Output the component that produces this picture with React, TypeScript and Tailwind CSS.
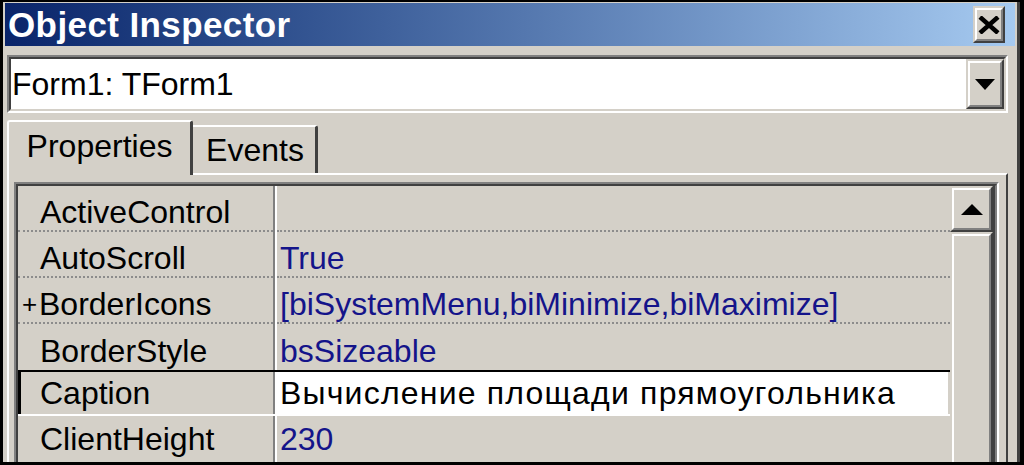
import React from "react";

type Row = {
  name: string;
  value: string;
  plus?: boolean;
  selected?: boolean;
};

const rows: Row[] = [
  { name: "ActiveControl", value: "" },
  { name: "AutoScroll", value: "True" },
  { name: "BorderIcons", value: "[biSystemMenu,biMinimize,biMaximize]", plus: true },
  { name: "BorderStyle", value: "bsSizeable" },
  { name: "Caption", value: "Вычисление площади прямоугольника", selected: true },
  { name: "ClientHeight", value: "230" },
];

function Raised({ className, children }: { className: string; children?: React.ReactNode }) {
  return (
    <div
      className={
        "border-2 border-t-[#d4d0c8] border-l-[#d4d0c8] border-r-[#404040] border-b-[#404040] bg-[#d4d0c8] " +
        className
      }
    >
      <div className="w-full h-full border-2 border-t-white border-l-white border-r-[#808080] border-b-[#808080] flex items-center justify-center">
        {children}
      </div>
    </div>
  );
}

function PropRow({ row, index }: { row: Row; index: number }) {
  const beforeSelected = rows[index + 1]?.selected;
  const last = index === rows.length - 1;
  const dotted = !row.selected && !beforeSelected && !last;
  const cell = dotted ? "border-b-2 border-dotted border-b-[#8c8c8c]" : "";
  const shift = row.selected || last ? "" : "pt-[7px]";

  return (
    <div
      className={
        "flex h-[46px] shrink-0 " +
        (row.selected ? "border-t-2 border-t-black border-b-2 border-b-white" : "")
      }
    >
      <div
        className={
          "w-[255px] shrink-0 flex items-center " +
          cell +
          " " +
          shift +
          " " +
          (row.selected ? "border-l-[3px] border-l-black pl-[19px]" : row.plus ? "pl-[4px]" : "pl-[22px]")
        }
      >
        {row.plus && <span className="w-[17px] text-[26px]">+</span>}
        <span>{row.name}</span>
      </div>
      <div className="w-[4px] shrink-0 border-l-2 border-l-[#808080] border-r-2 border-r-white" />
      <div
        className={
          "flex-1 flex items-center pl-[3px] whitespace-nowrap " +
          cell +
          " " +
          shift +
          " " +
          (row.selected ? "bg-white text-black mr-[2px] tracking-[1.2px]" : "text-[#14148a]")
        }
      >
        {row.value}
      </div>
    </div>
  );
}

export default function App() {
  return (
    <div className="w-[1024px] h-[465px] bg-black pl-[3px] pt-[2px] pr-[4px] overflow-hidden font-['Liberation_Sans',Arial,sans-serif] text-[32px] leading-none text-black">
      <div className="h-[460px] overflow-hidden bg-[#d4d0c8] border-r-[3px] border-r-[#404040] pt-[1px] pl-[4px] pr-[9px] flex flex-col">
        {/* title bar */}
        <div className="h-[43px] shrink-0 -ml-[2px] -mr-[7px] flex items-center justify-between bg-linear-to-r from-[#0a246a] to-[#a6caf0] pl-[3px] pr-[10px]">
          <span className="text-white font-bold text-[35px] tracking-[0.4px]">Object Inspector</span>
          <Raised className="w-[32px] h-[37px]">
            <svg width="22" height="18" viewBox="0 0 22 18">
              <path d="M2 1 L20 17 M20 1 L2 17" stroke="black" strokeWidth="4.5" />
            </svg>
          </Raised>
        </div>

        {/* object combo */}
        <div className="mt-[9px] h-[58px] shrink-0 border-2 border-t-[#808080] border-l-[#808080] border-r-white border-b-white">
          <div className="h-full flex border-2 border-t-[#404040] border-l-[#404040] border-r-[#d4d0c8] border-b-[#d4d0c8] bg-white">
            <div className="flex-1 flex items-center pl-[1px]">Form1: TForm1</div>
            <Raised className="w-[38px] h-full">
              <svg width="20" height="11" viewBox="0 0 20 11">
                <path d="M0 0 H20 L10 11 Z" fill="black" />
              </svg>
            </Raised>
          </div>
        </div>

        {/* tabs */}
        <div className="mt-[7px] h-[53px] shrink-0 flex items-end">
          <div className="relative z-10 w-[186px] h-[55px] -mb-[2px] bg-[#d4d0c8] rounded-t-[3px] border-l-2 border-t-2 border-l-white border-t-white border-r-[3px] border-r-[#404040] flex items-center justify-center pb-[5px]">
            Properties
          </div>
          <div className="w-[125px] h-[48px] bg-[#d4d0c8] rounded-tr-[3px] border-t-2 border-t-white border-r-[3px] border-r-[#404040] flex items-center justify-center pl-[2px]">
            Events
          </div>
        </div>

        {/* sheet */}
        <div className="flex-1 border-t-2 border-l-2 border-t-white border-l-white border-r-2 border-r-[#404040] pt-[7px] pl-[5px] pr-[7px]">
          <div className="h-[300px] border-2 border-t-[#808080] border-l-[#808080] border-r-white border-b-white">
            <div className="h-full flex border-2 border-t-[#404040] border-l-[#404040] border-r-[#808080] border-b-[#d4d0c8]">
              <div className="flex-1 flex flex-col">
                {rows.map((row, i) => (
                  <PropRow key={row.name} row={row} index={i} />
                ))}
              </div>
              <div className="w-[45px] shrink-0 flex flex-col border-r-2 border-r-[#404040]">
                <Raised className="w-full h-[46px] shrink-0">
                  <svg width="22" height="11" viewBox="0 0 22 11">
                    <path d="M11 0 L22 11 H0 Z" fill="black" />
                  </svg>
                </Raised>
                <Raised className="w-full flex-1" />
              </div>
            </div>
          </div>
        </div>
      </div>
    </div>
  );
}
